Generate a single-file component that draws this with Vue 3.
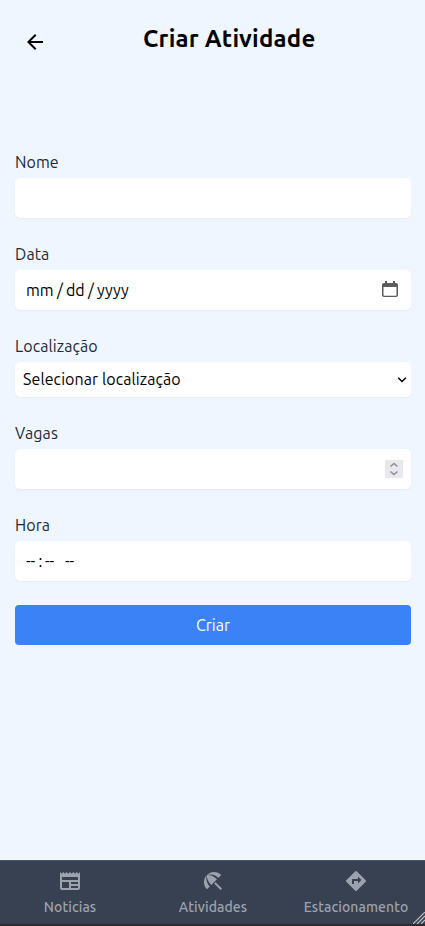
<script setup>
const tabs = [
  {
    label: 'Noticias',
    name: 'news',
    icon: 'M22 3l-1.67 1.67L18.67 3 17 4.67 15.33 3l-1.66 1.67L12 3l-1.67 1.67L8.67 3 7 4.67 5.33 3 3.67 4.67 2 3v16c0 1.1.9 2 2 2h16a2 2 0 002-2V3zM11 19H4v-6h7v6zm9 0h-7v-2h7v2zm0-4h-7v-2h7v2zm0-4H4V8h16v3z',
  },
  {
    label: 'Atividades',
    name: 'activities',
    icon: 'M13.127 14.56l1.43-1.43 6.44 6.443L19.57 21zm4.293-5.73l2.86-2.86c-3.95-3.95-10.35-3.96-14.3-.02 3.93-1.3 8.31-.25 11.44 2.88zM5.95 5.98c-3.94 3.95-3.93 10.35.02 14.3l2.86-2.86C5.7 14.29 4.65 9.91 5.95 5.98zm.02-.02l-.01.01c-.38 3.01 1.17 6.88 4.3 10.02l5.73-5.73c-3.13-3.13-7.01-4.68-10.02-4.3z',
  },
  {
    label: 'Estacionamento',
    name: 'parking',
    icon: 'M21.71 11.29l-9-9a.996.996 0 00-1.41 0l-9 9a.996.996 0 000 1.41l9 9c.39.39 1.02.39 1.41 0l9-9a.996.996 0 000-1.41zM14 14.5V12h-4v3H8v-4c0-.55.45-1 1-1h5V7.5l3.5 3.5-3.5 3.5z',
  },
]
</script>

<template>
  <div class="page">
    <header class="header">
      <svg class="back" viewBox="0 0 24 24"><path d="M20 11H7.83l5.59-5.59L12 4l-8 8 8 8 1.41-1.41L7.83 13H20v-2z" /></svg>
      <h1 class="title">Criar Atividade</h1>
    </header>

    <main class="form">
      <div class="field">
        <div class="label">Nome</div>
        <div class="control"></div>
      </div>
      <div class="field">
        <div class="label">Data</div>
        <div class="control">
          <div class="parts"><span class="mm">mm</span><span class="slash">/</span><span class="dd">dd</span><span class="slash">/</span><span class="yyyy">yyyy</span></div>
          <svg class="calendar" viewBox="0 0 16 16">
            <path fill-rule="evenodd" d="M3 0h2v2h6V0h2v2h1a2 2 0 0 1 2 2v10a2 2 0 0 1-2 2H2a2 2 0 0 1-2-2V4a2 2 0 0 1 2-2h1zM1.5 6v8q0 .7.7.7h11.6q.7 0 .7-.7V6z" />
          </svg>
        </div>
      </div>
      <div class="field">
        <div class="label">Localização</div>
        <div class="control select">
          <span>Selecionar localização</span>
          <svg class="chevron" viewBox="0 0 10 8"><path d="M1.2 1.7 5 5.5l3.8-3.8" /></svg>
        </div>
      </div>
      <div class="field">
        <div class="label">Vagas</div>
        <div class="control number">
          <svg class="spinner" viewBox="0 0 18 18"><path d="M5.5 6.5 9 3.5l3.5 3M5.5 11.5l3.5 3 3.5-3" /></svg>
        </div>
      </div>
      <div class="field">
        <div class="label">Hora</div>
        <div class="control">
          <div class="parts"><span class="dash">--</span><span class="colon">:</span><span class="dash">--</span><span class="dash period">--</span></div>
        </div>
      </div>
      <button class="submit">Criar</button>
    </main>

    <nav class="tabs">
      <a v-for="tab in tabs" :key="tab.name" class="tab">
        <svg class="tab-icon" viewBox="0 0 24 24"><path :d="tab.icon" /></svg>
        <span>{{ tab.label }}</span>
      </a>
      <svg class="grip" viewBox="0 0 12 12"><path d="M0 12 12 0M4 12l8-8M8 12l4-4" /></svg>
    </nav>
  </div>
</template>

<style>
body { background: #eff6ff; }
</style>

<style scoped>
* { box-sizing: border-box; }
.page {
  display: flex;
  flex-direction: column;
  width: 425px;
  height: 926px;
  overflow: hidden;
  background: #eff6ff;
  color: #000;
  font-family: Ubuntu, "Noto Sans", sans-serif;
  font-size: 16px;
  line-height: 24px;
  letter-spacing: 0.09px;
  white-space: nowrap;
}
.header {
  display: flex;
  height: 150px;
  padding: 22px 0 0 23px;
  flex: none;
}
.back { width: 24px; height: 24px; margin-top: 8px; }
.title {
  margin: 1px 0 0 96px;
  font-size: 24px;
  line-height: 32px;
  font-weight: 700;
  letter-spacing: 0.22px;
}
.form { flex: 1; padding: 0 14px 0 15px; }
.field { margin-bottom: 24px; }
.label { height: 28px; color: #1f2937; }
.control {
  display: flex;
  align-items: center;
  height: 40px;
  padding: 0 13px 0 11px;
  border-radius: 5px;
  background: #fff;
  box-shadow: 0 1px 2px rgba(0, 0, 0, .05);
}
.select { height: 35px; padding: 0 4px 1px 8px; }
.chevron { width: 10px; height: 8px; margin: 1px 0 0 auto; }
.chevron path { fill: none; stroke: #000; stroke-width: 1.5; }
.parts { display: flex; letter-spacing: 0; }
.mm { width: 28px; }
.slash { width: 12px; text-align: center; }
.dd { width: 19px; }
.calendar { width: 16px; height: 16px; margin: -2px 0 0 auto; fill: #5b5b5b; }
.number { padding-right: 8px; }
.spinner { width: 18px; height: 18px; margin-left: auto; background: #e9e9ed; }
.spinner path { fill: none; stroke: #8f8f9d; stroke-width: 1.6; }
.dash { width: 10px; }
.colon { width: 9px; text-align: center; }
.period { margin-left: 10px; }
.submit {
  display: block;
  width: 100%;
  height: 40px;
  padding: 0;
  border: 0;
  border-radius: 4px;
  background: #3b82f6;
  color: #fff;
  font: inherit;
}
.tabs {
  position: relative;
  display: grid;
  grid-template-columns: 140px 146px 140px;
  flex: none;
  height: 66px;
  border-top: 1px solid #4b5563;
  border-bottom: 2px solid #302b2e;
  background: #374151;
}
.tab {
  display: flex;
  flex-direction: column;
  align-items: center;
  padding-top: 8px;
  color: #9ca3af;
  font-size: 14px;
  line-height: 20px;
  font-weight: 500;
}
.tab-icon { width: 24px; height: 24px; margin-bottom: 4px; fill: currentColor; }
.grip { position: absolute; right: 0; bottom: 0; width: 12px; height: 12px; }
.grip path { fill: none; stroke: #c5c6c8; stroke-width: 1.1; }
</style>
